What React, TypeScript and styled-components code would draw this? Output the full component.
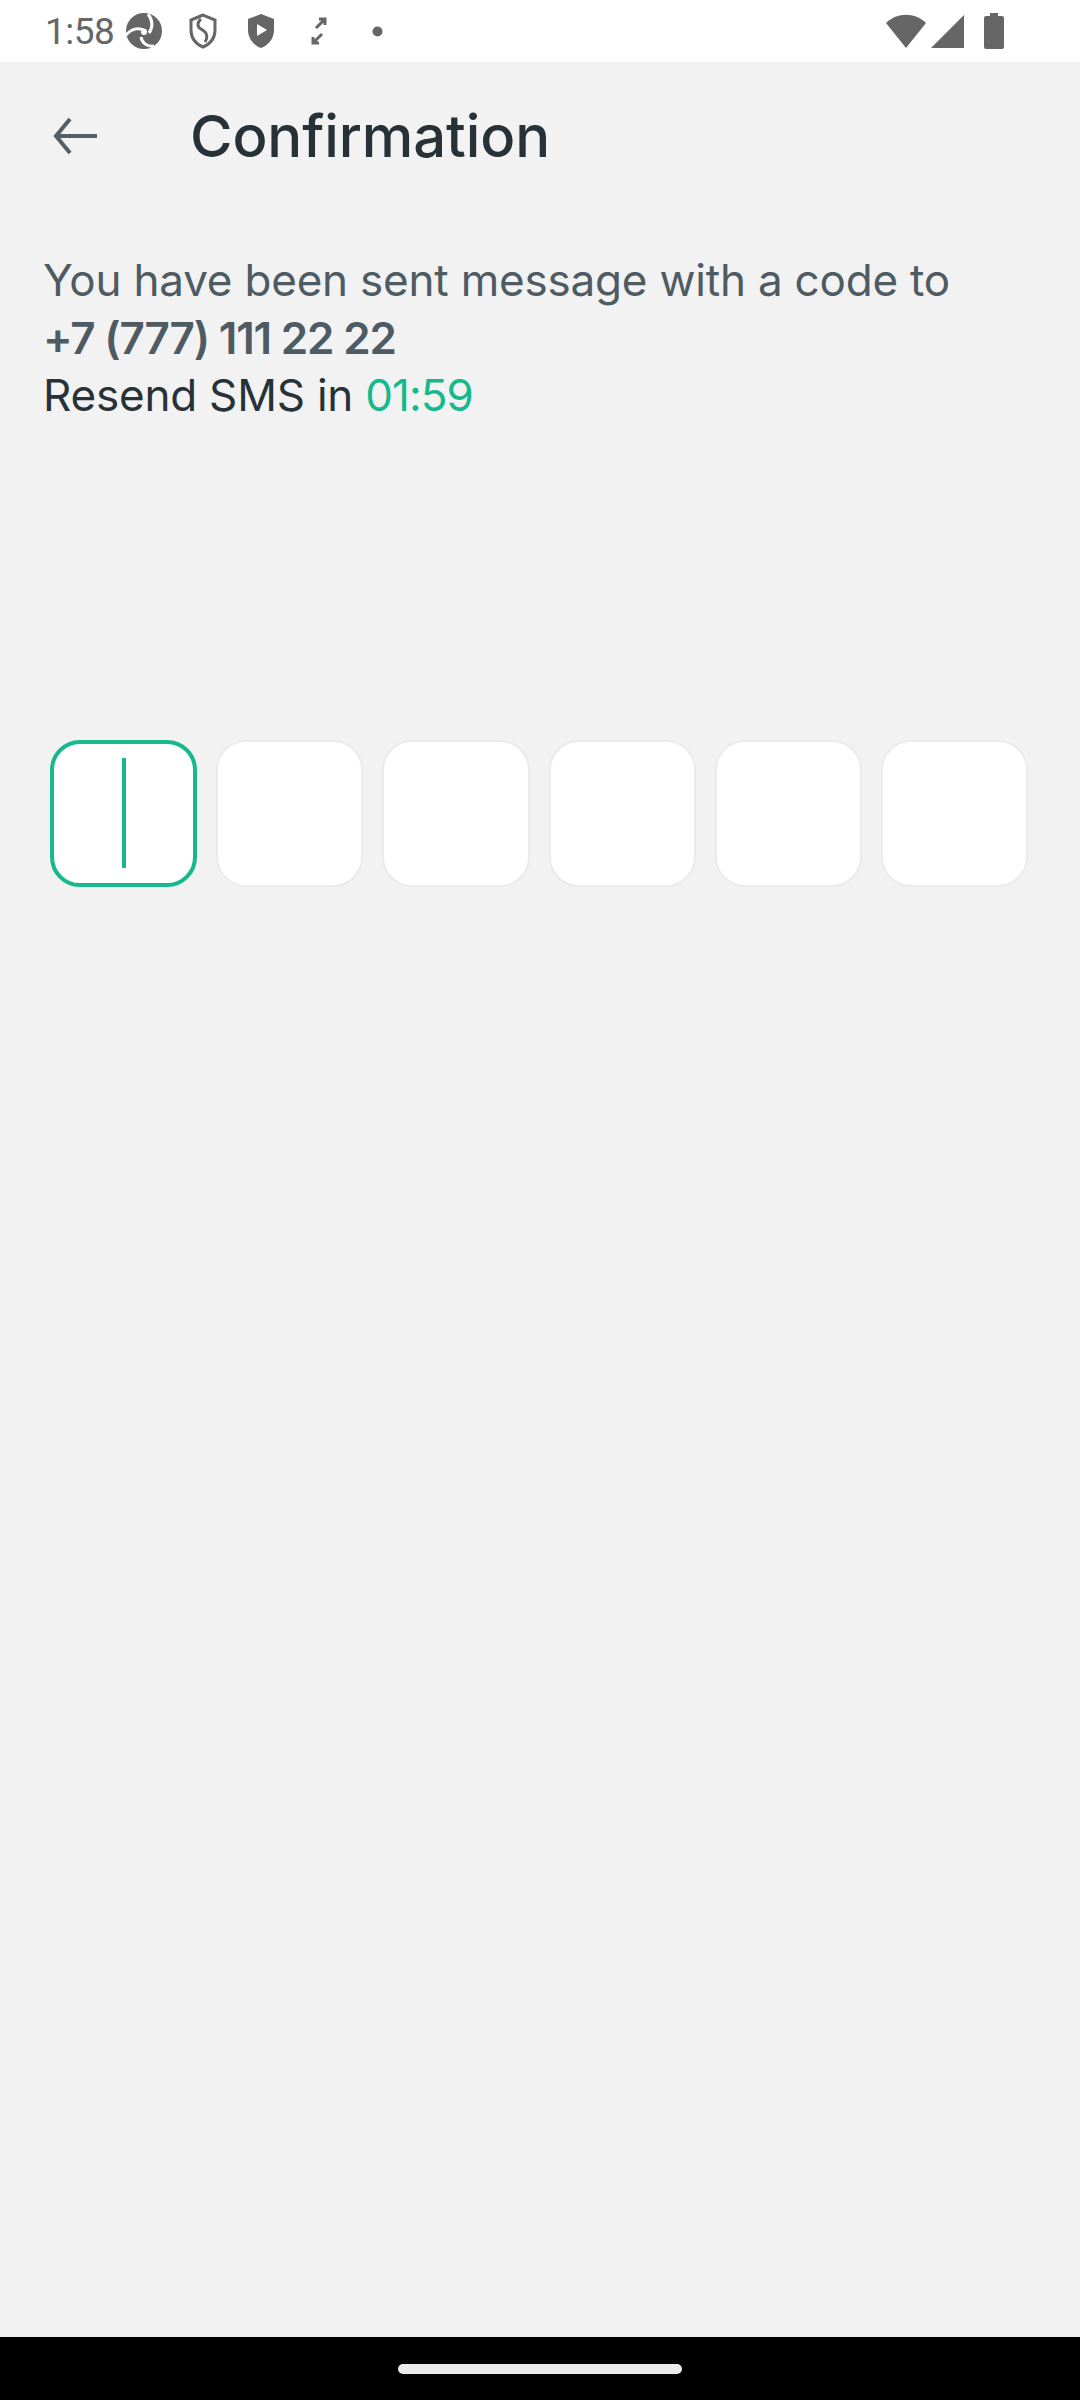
import { createGlobalStyle, styled } from "styled-components";

const GlobalStyle = createGlobalStyle`
  html, body {
    margin: 0;
    padding: 0;
    background: #f2f2f2;
  }
  * {
    box-sizing: border-box;
  }
`;

const Screen = styled.div`
  width: 1080px;
  min-height: 2400px;
  display: flex;
  flex-direction: column;
  background: #f2f2f2;
  font-family: Inter, "Noto Sans", sans-serif;
`;

const StatusBar = styled.div`
  height: 62px;
  background: #ffffff;
  display: flex;
  align-items: center;
  justify-content: space-between;
  padding: 0 75px 0 45px;
  color: #666666;
`;

const StatusLeft = styled.div`
  display: flex;
  align-items: center;
`;

const Clock = styled.span`
  font-family: Roboto, "Liberation Sans", sans-serif;
  font-size: 37px;
  letter-spacing: -0.5px;
  margin-right: 10px;
  line-height: 1;
`;

const StatusIcon = styled.svg<{ $gap?: number }>`
  display: block;
  flex-shrink: 0;
  margin-right: ${(p) => p.$gap ?? 0}px;
  fill: #666666;
`;

const StatusRight = styled.div`
  display: flex;
  align-items: center;
  gap: 2px;
`;

const Header = styled.header`
  height: 148px;
  display: flex;
  align-items: center;
`;

const BackButton = styled.button`
  width: 190px;
  flex-shrink: 0;
  height: 100%;
  border: none;
  background: transparent;
  padding: 0 0 0 51px;
  display: flex;
  align-items: center;
  cursor: pointer;
`;

const Title = styled.h1`
  margin: 0;
  font-size: 58px;
  font-weight: 500;
  color: #263238;
  letter-spacing: -0.1px;
`;

const Message = styled.div`
  margin-top: 42px;
  padding: 0 43px;
  font-size: 44px;
  line-height: 57.5px;
  letter-spacing: -0.2px;
`;

const Line = styled.div<{ $tone?: "muted" | "dark"; $bold?: boolean }>`
  color: ${(p) => (p.$tone === "dark" ? "#263238" : "#4f5b63")};
  font-weight: ${(p) => (p.$bold ? 600 : 400)};
  letter-spacing: ${(p) => (p.$bold ? "-1.2px" : "inherit")};
`;

const Timer = styled.span`
  color: #15b98b;
  letter-spacing: -1px;
`;

const CodeRow = styled.div`
  margin-top: 315px;
  padding: 0 52px 0 50px;
  display: grid;
  grid-template-columns: repeat(6, 1fr);
  gap: 19px;
`;

const CodeCell = styled.div<{ $active?: boolean }>`
  height: 147px;
  border-radius: 30px;
  background: #ffffff;
  border: ${(p) => (p.$active ? "4px solid #15b98b" : "2px solid #ebebeb")};
  display: flex;
  align-items: center;
  justify-content: center;
`;

const Caret = styled.div`
  width: 4px;
  height: 110px;
  background: #15b98b;
`;

const Spacer = styled.div`
  flex: 1;
`;

const NavBar = styled.div`
  height: 63px;
  background: #000000;
  display: flex;
  align-items: center;
  justify-content: center;
`;

const NavPill = styled.div`
  width: 284px;
  height: 10px;
  border-radius: 5px;
  background: #ebebeb;
`;

function BackArrow() {
  return (
    <svg width="48" height="48" viewBox="0 0 48 48" fill="none">
      <path
        d="M46 24H6M19 7L5 24l14 17"
        stroke="#525f67"
        strokeWidth="4"
        strokeLinecap="butt"
      />
    </svg>
  );
}

export default function App() {
  return (
    <>
      <GlobalStyle />
      <Screen>
        <StatusBar>
          <StatusLeft>
            <Clock>1:58</Clock>
            <StatusIcon width="40" height="38" viewBox="0 0 40 38" $gap={24}>
              <circle cx="20" cy="19" r="18" />
              <path
                d="M2 23c6-7 14-8 20-4M24 2c5 6 5 14 1 19M30 34c-7 1-12-3-13-9"
                stroke="#fff"
                strokeWidth="3"
                fill="none"
              />
              <circle cx="20" cy="20" r="3" fill="#fff" />
            </StatusIcon>
            <StatusIcon width="30" height="36" viewBox="0 0 30 36" $gap={28}>
              <path
                d="M15 2L3 7v10c0 8 5 14 12 17 7-3 12-9 12-17V7z"
                fill="none"
                stroke="#666"
                strokeWidth="3"
              />
              <path
                d="M13 6c-4 3-4 8 0 10l3 2c3 2 4 7 1 11"
                fill="none"
                stroke="#666"
                strokeWidth="3"
              />
            </StatusIcon>
            <StatusIcon width="30" height="36" viewBox="0 0 30 36" $gap={34}>
              <path d="M15 1L2 6v11c0 8 5 15 13 18 8-3 13-10 13-18V6z" />
              <path d="M11 11l10 6-10 6z" fill="#fff" />
            </StatusIcon>
            <StatusIcon width="18" height="28" viewBox="0 0 18 28" $gap={44}>
              <path
                d="M6 11l9-9M9 2h6v6M12 17l-9 9M3 20v6h6"
                stroke="#666"
                strokeWidth="3"
                fill="none"
              />
            </StatusIcon>
            <StatusIcon width="11" height="11" viewBox="0 0 11 11">
              <circle cx="5.5" cy="5.5" r="5" />
            </StatusIcon>
          </StatusLeft>
          <StatusRight>
            <StatusIcon width="42" height="36" viewBox="0 0 42 36">
              <path d="M1 10C12 -1 30 -1 41 10L21 35z" />
            </StatusIcon>
            <StatusIcon width="36" height="36" viewBox="0 0 36 36" $gap={16}>
              <path d="M2 35L35 2v33z" />
            </StatusIcon>
            <StatusIcon width="22" height="36" viewBox="0 0 22 36">
              <path d="M7 0h8v3h4a2 2 0 0 1 2 2v29a2 2 0 0 1-2 2H3a2 2 0 0 1-2-2V5a2 2 0 0 1 2-2h4z" />
            </StatusIcon>
          </StatusRight>
        </StatusBar>

        <Header>
          <BackButton aria-label="Back">
            <BackArrow />
          </BackButton>
          <Title>Confirmation</Title>
        </Header>

        <Message>
          <Line>You have been sent message with a code to</Line>
          <Line $bold>+7 (777) 111 22 22</Line>
          <Line $tone="dark">
            Resend SMS in <Timer>01:59</Timer>
          </Line>
        </Message>

        <CodeRow>
          <CodeCell $active>
            <Caret />
          </CodeCell>
          <CodeCell />
          <CodeCell />
          <CodeCell />
          <CodeCell />
          <CodeCell />
        </CodeRow>

        <Spacer />

        <NavBar>
          <NavPill />
        </NavBar>
      </Screen>
    </>
  );
}
